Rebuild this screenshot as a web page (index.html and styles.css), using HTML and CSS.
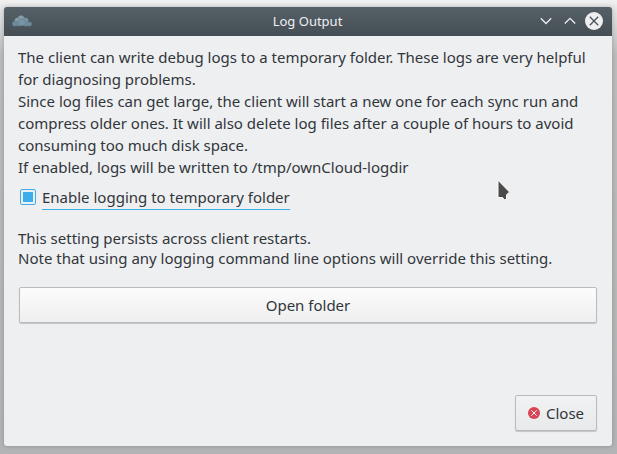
FILE: index.html
```html
<!DOCTYPE html>
<html lang="en">
<head>
<meta charset="utf-8">
<title>Log Output</title>
<link rel="stylesheet" href="styles.css">
</head>
<body>
<div class="window">
  <header class="titlebar">
    <svg class="cloud" width="20" height="12" viewBox="0 0 20 12">
      <g fill="#6f8d9c" stroke="#5f7c8b" stroke-width=".4">
        <circle cx="9" cy="3.8" r="3.3" fill="#8b9fa9"/>
        <circle cx="5.5" cy="5.5" r="2.8" fill="#8b9fa9"/>
        <circle cx="13.5" cy="5.6" r="2.9" fill="#7d96a3"/>
        <circle cx="2.8" cy="8.7" r="2.5"/>
        <circle cx="17.5" cy="9" r="2.2"/>
        <circle cx="6.5" cy="8.6" r="2.6"/>
        <circle cx="14" cy="8.7" r="2.6"/>
        <circle cx="10" cy="7.2" r="3.6" fill="#7895a3"/>
      </g>
    </svg>
    <h1 class="title">Log Output</h1>
    <div class="controls">
      <svg width="12" height="18" viewBox="0 0 12 18"><path d="M.8 6.3 6 11.5l5.200-5.200"/></svg>
      <svg width="12" height="18" viewBox="0 0 12 18"><path d="M.8 11.500 6 6.300l5.200 5.200"/></svg>
      <svg width="18" height="18" viewBox="0 0 18 18"><circle cx="9" cy="9" r="9"/><path class="cross" d="m4.800 4.800 8.400 8.400m0-8.400-8.400 8.400"/></svg>
    </div>
  </header>
  <main class="content">
    <p class="intro">The client can write debug logs to a temporary folder. These logs are very helpful<br>for diagnosing problems.<br>Since log files can get large, the client will start a new one for each sync run and<br>compress older ones. It will also delete log files after a couple of hours to avoid<br>consuming too much disk space.<br>If enabled, logs will be written to /tmp/ownCloud-logdir</p>
    <div class="option"><span class="checkbox"></span><span class="option-label">Enable logging to temporary folder</span></div>
    <p class="note">This setting persists across client restarts.<br>Note that using any logging command line options will override this setting.</p>
    <button class="button open">Open folder</button>
    <button class="button close"><svg width="12" height="12" viewBox="0 0 12 12"><circle cx="6" cy="6" r="6" fill="#da4453"/><path d="m3.300 3.300 5.400 5.400m0-5.400-5.400 5.400" stroke="#fff" stroke-width="1"/></svg>Close</button>
  </main>
</div>
<svg class="pointer" width="14" height="23" viewBox="0 0 14 23"><path d="M1 1.200v17.300h4.500l2 2.300 2-.8v-4.200l3-2.800z" fill="#4b4b4b" stroke="#fff" stroke-width="1"/></svg>
</body>
</html>
```
FILE: styles.css
```css
* { box-sizing: border-box; }
body {
  margin: 0;
  height: 454px;
  padding: 7px 5px 8px 4px;
  overflow: hidden;
  background: linear-gradient(#f1f1f1 0, #e4e4e4 10px, #bcbcbc 55px, #b3b4b5 100%);
  font: 15px "Noto Sans", sans-serif;
  color: #31363b;
}
.window {
  display: flex;
  flex-direction: column;
  height: 439px;
  border-radius: 3px;
  background: #eeeff1;
  overflow: hidden;
  box-shadow: 0 0 4px rgba(0, 0, 0, .22);
}
.titlebar {
  display: grid;
  grid-template-columns: 80px 1fr 80px;
  align-items: center;
  height: 29px;
  padding: 0 9px 0 8px;
  background: linear-gradient(#566067, #454e55);
}
.title {
  margin: -2px 0 0;
  text-align: center;
  font-size: 13px;
  font-weight: 400;
  color: #eeeff1;
}
.cloud { margin-top: -2px; }
.controls {
  display: flex;
  justify-content: flex-end;
  align-items: center;
  gap: 12px;
  margin-top: -1px;
}
.controls svg:last-child { margin-left: -3px; }
.controls path { fill: none; stroke: #eeeff1; stroke-width: 1.3; }
.controls circle { fill: #eeeff1; }
.controls .cross { stroke: #4a535a; }
.content {
  display: flex;
  flex-direction: column;
  flex: 1;
  padding: 10px 15px 15px 14px;
  white-space: nowrap;
}
p { margin: 0; }
.intro { line-height: 22px; letter-spacing: -.003px; }
.option {
  display: flex;
  gap: 6px;
  height: 31px;
  padding: 8px 0 0 2px;
}
.checkbox {
  width: 16px;
  height: 16px;
  margin-top: 3px;
  border: 1px solid #3daee9;
  border-radius: 2px;
  background: #3daee9 content-box;
  padding: 2px;
}
.option-label {
  height: 24px;
  line-height: 22px;
  border-bottom: 1px solid #3daee9;
}
.note { margin-top: 19px; line-height: 20px; }
.button {
  display: flex;
  align-items: center;
  justify-content: center;
  height: 36px;
  padding: 0;
  border: 1px solid #b9babb;
  border-radius: 2px;
  background: linear-gradient(#fcfcfc, #efefef);
  box-shadow: 0 1px 1px rgba(0, 0, 0, .18);
  font: inherit;
  color: inherit;
}
.open { margin: 19px 0 0 1px; }
.close {
  align-self: flex-end;
  width: 82px;
  gap: 6px;
  margin-top: auto;
  background: linear-gradient(#f1f2f3, #e8e9ea);
}
.pointer { position: absolute; left: 497px; top: 179px; }
```
